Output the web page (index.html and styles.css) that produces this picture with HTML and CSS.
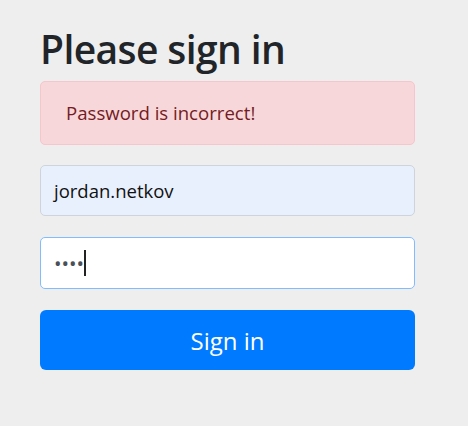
FILE: index.html
```html
<!DOCTYPE html>
<html lang="en">
<head>
    <meta charset="UTF-8">
    <meta name="viewport" content="width=device-width, initial-scale=1.0">
    <title>Please sign in</title>
    <link rel="stylesheet" href="styles.css">
</head>
<body>
    <div class="form-signin">
        <h2 class="form-signin-heading">Please sign in</h2>
        <div class="alert alert-danger">Password is incorrect!</div>

        <!-- campi disegnati come input, il secondo ha il focus -->
        <div class="form-control autofilled">jordan.netkov</div>
        <div class="form-control focused"><span class="dots">&bull;&bull;&bull;&bull;</span><span class="caret"></span></div>

        <button class="btn btn-primary" type="button">Sign in</button>
    </div>
</body>
</html>
```

FILE: styles.css
```css
body {
    margin: 0;
    background: #eeeeee;
    font-family: 'Open Sans', 'Noto Sans', sans-serif;
    color: #212529;
}
.form-signin {
    width: 375px;
    margin-left: 40px;
    padding-top: 25px;
}
.form-signin-heading {
    font-size: 39px;
    line-height: 48px;
    font-weight: 600;
    margin: 0 0 8px;
    letter-spacing: -0.6px;
}
.alert {
    padding: 16px 25px;
    font-size: 18.6px;
    line-height: 30px;
    border-radius: 5px;
    margin-bottom: 20px;
}
.alert-danger {
    color: #721c24;
    background: #f8d7da;
    border: 1px solid #f5c6cb;
}
.form-control {
    box-sizing: border-box;
    height: 51px;
    padding: 0 13px;
    font-size: 18.5px;
    display: flex;
    align-items: center;
    border: 1px solid #ced4da;
    border-radius: 5px;
    margin-bottom: 21px;
    color: #111;
    background: #ffffff;
}
.autofilled {
    background: #e8f0fe;
}
.focused {
    height: 52px;
    border-color: #80bdff;
}
.dots {
    color: #495057;
    font-size: 20px;
}
.caret {
    width: 2px;
    height: 26px;
    background: #222;
}
.btn {
    display: block;
    width: 100%;
    height: 60px;
    padding: 0;
    font-family: inherit;
    font-size: 24px;
    color: #fff;
    border: none;
    border-radius: 6px;
    cursor: pointer;
}
.btn-primary {
    background: #007bff;
}
```
